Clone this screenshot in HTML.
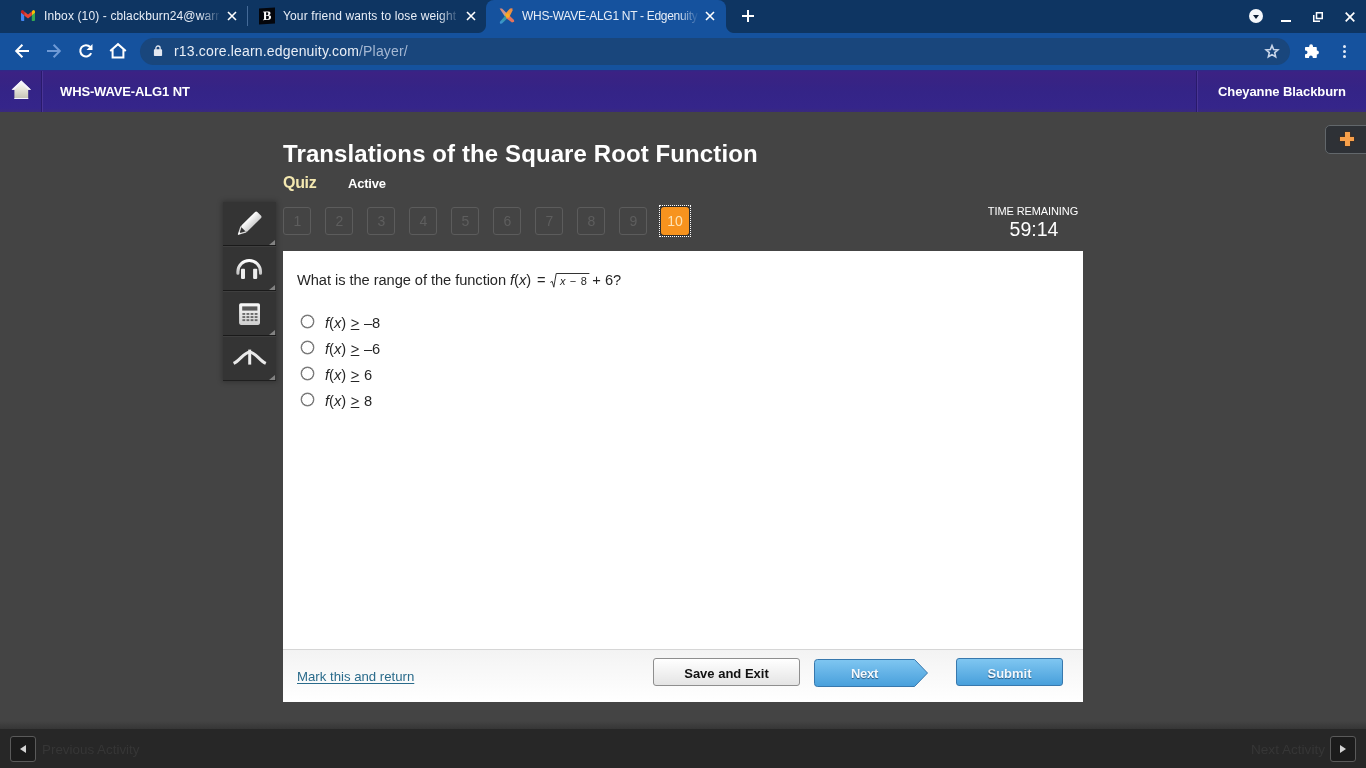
<!DOCTYPE html>
<html>
<head>
<meta charset="utf-8">
<title>WHS-WAVE-ALG1 NT - Edgenuity</title>
<style>
*{box-sizing:border-box;margin:0;padding:0}
html,body{width:1366px;height:768px;overflow:hidden;background:#444444;font-family:"Liberation Sans",sans-serif;}
.abs{position:absolute}
#root{position:absolute;left:0;top:0;width:1366px;height:768px;will-change:transform;overflow:hidden}
#tabbar{position:absolute;left:0;top:0;width:1366px;height:33px;background:#0e3562;}
#toolbar{position:absolute;left:0;top:33px;width:1366px;height:37px;background:#15529e;}
#omni{position:absolute;left:140px;top:38px;width:1150px;height:26.5px;border-radius:13.5px;background:#19467c;}
.tabtxt{position:absolute;top:8px;font-size:12px;color:#e8eef7;white-space:nowrap;overflow:hidden;line-height:16px;letter-spacing:0.13px;-webkit-mask-image:linear-gradient(90deg,#000 0,#000 156px,transparent 177px);mask-image:linear-gradient(90deg,#000 0,#000 156px,transparent 177px)}
#activetab{position:absolute;left:486px;top:0;width:240px;height:33px;background:#15529e;border-radius:8px 8px 0 0;}
#purple{position:absolute;left:0;top:70px;width:1366px;height:42px;background:linear-gradient(#2c2a88 0,#3c2284 2px,#382384 10px,#342487 22px,#35258a 38px,#3a2a7c 42px);}
#bottombar{position:absolute;left:0;top:729px;width:1366px;height:39px;background:#272727;}
#content{position:absolute;left:283px;top:251px;width:800px;height:451px;background:#fff;}
#footer{position:absolute;left:0;top:398px;width:800px;height:53px;background:linear-gradient(#f3f3f3,#ffffff);border-top:1px solid #d6d6d6}

.tri{position:absolute;left:269px;width:0;height:0;border-left:6px solid transparent;border-bottom:5px solid #828282;}
.qn{position:absolute;top:207px;width:28px;height:28px;padding-left:1px;border:1px solid #5c5c5c;border-radius:3px;color:#5e5e5e;font-size:14px;line-height:26px;text-align:center;}
.qn.act{background:#f7931e;border:0;color:#fde3b4;line-height:28px;box-shadow:0 0 0 1px #2c2c2c;border-radius:3px;padding-left:0}
.q{font-size:14.667px;line-height:18px;color:#262626;white-space:nowrap}
.opt{left:42px;font-size:14.667px;line-height:18px;color:#262626;word-spacing:0.5px;white-space:nowrap}
.radio{position:absolute;left:18px;width:13px;height:13px;border:1px solid #6c6c6c;box-shadow:0 0 0 0.4px #8a8a8a;border-radius:50%;background:#fff}
.rad{position:relative;display:inline-block;padding-left:10px;padding-right:3px;margin:0 -1.6px 0 0.2px}
.radin{display:inline-block;font-size:11px;line-height:13px;word-spacing:1.4px;letter-spacing:0}
.btn{font-size:13px;font-weight:bold;line-height:29px;text-align:center;border-radius:3px;white-space:nowrap}
</style>
</head>
<body>
<div id="root">
<!-- browser chrome -->
<div id="tabbar"></div>
<div id="activetab"></div>
<div class="abs" style="left:478px;top:25px;width:8px;height:8px;background:radial-gradient(circle at 0 0, #0e3562 7.5px, #15529e 8.5px)"></div>
<div class="abs" style="left:726px;top:25px;width:8px;height:8px;background:radial-gradient(circle at 100% 0, #0e3562 7.5px, #15529e 8.5px)"></div>
<div id="toolbar"></div>
<div id="omni"></div>

<!-- tab 1: gmail -->
<svg class="abs" style="left:21px;top:10px" width="14" height="11" viewBox="0 0 14 11">
  <path d="M0 1.2 V10 a1 1 0 0 0 1 1 H3.2 V4.2 Z" fill="#4285f4"/>
  <path d="M14 1.2 V10 a1 1 0 0 1 -1 1 H10.8 V4.2 Z" fill="#34a853"/>
  <path d="M10.8 1.6 V5.2 L14 2.8 V1.6 a1.5 1.5 0 0 0 -2.4 -1.2 Z" fill="#fbbc04"/>
  <path d="M3.2 5.4 V1.6 L7 4.6 L10.8 1.6 V5.4 L7 8.4 Z" fill="#ea4335"/>
  <path d="M0 1.6 V2.8 L3.2 5.2 V1.6 L2.4 0.4 A1.5 1.5 0 0 0 0 1.6 Z" fill="#c5221f"/>
</svg>
<div class="tabtxt" style="left:44px;width:176px">Inbox (10) - cblackburn24@warr</div>
<svg class="abs" style="left:227px;top:11px" width="10" height="10" viewBox="0 0 10 10"><path d="M1 1 L9 9 M9 1 L1 9" stroke="#fff" stroke-width="1.6" fill="none"/></svg>
<div class="abs" style="left:247px;top:6px;width:1px;height:20px;background:#446a98"></div>

<!-- tab 2: B -->
<div class="abs" style="left:259px;top:8px;width:16px;height:16px;background:#04060c;transform:skewY(-4deg)"></div>
<div class="abs" style="left:259px;top:8px;width:16px;height:16px;color:#fff;font-family:'Liberation Serif',serif;font-weight:bold;font-size:13px;line-height:16px;text-align:center;transform:skewY(-4deg)">B</div>
<div class="tabtxt" style="left:283px;width:176px">Your friend wants to lose weight</div>
<svg class="abs" style="left:466px;top:11px" width="10" height="10" viewBox="0 0 10 10"><path d="M1 1 L9 9 M9 1 L1 9" stroke="#fff" stroke-width="1.6" fill="none"/></svg>

<!-- tab 3: edgenuity -->
<svg class="abs" style="left:498px;top:8px" width="18" height="17" viewBox="0 0 18 17">
  <defs>
    <linearGradient id="e1" x1="0" y1="0" x2="1" y2="1"><stop offset="0" stop-color="#dd8470"/><stop offset="1" stop-color="#b7a3ad"/></linearGradient>
    <linearGradient id="e2" x1="1" y1="0" x2="0" y2="1"><stop offset="0" stop-color="#e8834a"/><stop offset="1" stop-color="#fbb024"/></linearGradient>
    <linearGradient id="e3" x1="1" y1="0" x2="0" y2="1"><stop offset="0" stop-color="#2f9d86"/><stop offset="1" stop-color="#3f93dc"/></linearGradient>
  </defs>
  <polygon points="1.6,0.4 4,0.6 10,6.6 7.2,9" fill="url(#e1)"/>
  <polygon points="2,15.8 1.8,14 7.4,7.6 10,9.8 4,15.6" fill="url(#e3)"/>
  <polygon points="16.2,13.8 14,14.4 7.8,10 10.4,6.6 16,12" fill="#e3745c"/>
  <polygon points="14.4,0.2 12,0.6 6.6,6.6 10.8,10 14.6,2.4" fill="url(#e2)"/>
  <circle cx="9.4" cy="7.8" r="2" fill="#fbae26"/>
</svg>
<div class="tabtxt" style="left:522px;width:176px;letter-spacing:-0.3px">WHS-WAVE-ALG1 NT - Edgenuity</div>
<svg class="abs" style="left:705px;top:11px" width="10" height="10" viewBox="0 0 10 10"><path d="M1 1 L9 9 M9 1 L1 9" stroke="#fff" stroke-width="1.6" fill="none"/></svg>
<!-- new tab + -->
<svg class="abs" style="left:741px;top:9px" width="14" height="14" viewBox="0 0 14 14"><path d="M7 1 V13 M1 7 H13" stroke="#fff" stroke-width="2" fill="none"/></svg>

<!-- window controls -->
<div class="abs" style="left:1249px;top:9px;width:14px;height:14px;border-radius:7px;background:#f4f7fb"></div>
<div class="abs" style="left:1253px;top:14.5px;width:0;height:0;border-left:3px solid transparent;border-right:3px solid transparent;border-top:4px solid #0b1c33"></div>
<div class="abs" style="left:1281px;top:20px;width:10px;height:2px;background:#fff"></div>
<svg class="abs" style="left:1313px;top:12px" width="10" height="10" viewBox="0 0 10 10">
  <path d="M3.5 0.75 H9.25 V6.5 H3.5 Z" stroke="#fff" stroke-width="1.5" fill="none"/>
  <path d="M0.75 3 V9.25 H7" stroke="#fff" stroke-width="1.5" fill="none"/>
  <rect x="5.4" y="2.6" width="2" height="2" fill="#0b1c33"/>
</svg>
<svg class="abs" style="left:1345px;top:12px" width="10" height="10" viewBox="0 0 10 10"><path d="M0.7 0.7 L9.3 9.3 M9.3 0.7 L0.7 9.3" stroke="#fff" stroke-width="1.7" fill="none"/></svg>

<!-- nav icons -->
<svg class="abs" style="left:14px;top:43px" width="16" height="16" viewBox="0 0 16 16"><path d="M15 8 H3.2 M8.4 1.7 L2.2 8 L8.4 14.3" stroke="#fff" stroke-width="2" fill="none"/></svg>
<svg class="abs" style="left:46px;top:43px" width="16" height="16" viewBox="0 0 16 16"><path d="M1 8 H12.8 M7.6 1.7 L13.8 8 L7.6 14.3" stroke="#6f9ad6" stroke-width="2" fill="none"/></svg>
<svg class="abs" style="left:78px;top:43px" width="16" height="16" viewBox="0 0 16 16">
  <path d="M13.2 10.2 A5.7 5.7 0 1 1 12.2 4" stroke="#fff" stroke-width="2" fill="none"/>
  <path d="M14.5 1 V7 H8.5 Z" fill="#fff"/>
</svg>
<svg class="abs" style="left:109px;top:42px" width="18" height="17" viewBox="0 0 18 17"><path d="M1.2 9 L9 2.2 L16.8 9 M3.6 7.6 V15.5 H14.4 V7.6" stroke="#fff" stroke-width="2" fill="none" stroke-linejoin="miter"/></svg>
<!-- lock -->
<svg class="abs" style="left:153px;top:45px" width="10" height="12" viewBox="0 0 10 12">
  <rect x="0.9" y="4.3" width="8.2" height="6.8" rx="0.8" fill="#e4e8f0"/>
  <path d="M2.9 5 V3.1 A2.1 2.1 0 0 1 7.1 3.1 V5" stroke="#e4e8f0" stroke-width="1.3" fill="none"/>
</svg>
<div class="abs" style="left:174px;top:43px;font-size:14px;line-height:16px;color:#e9eef6;white-space:nowrap;letter-spacing:0.17px">r13.core.learn.edgenuity.com<span style="color:#a5b8d3">/Player/</span></div>
<!-- star -->
<svg class="abs" style="left:1264px;top:43px" width="16" height="16" viewBox="0 0 16 16"><path d="M8 2.6 L9.65 6.5 L13.9 6.85 L10.7 9.65 L11.65 13.8 L8 11.6 L4.35 13.8 L5.3 9.65 L2.1 6.85 L6.35 6.5 Z" stroke="#c8d5e8" stroke-width="1.6" fill="none" stroke-linejoin="miter"/></svg>
<!-- puzzle -->
<svg class="abs" style="left:1303.3px;top:42.6px" width="16" height="16" viewBox="0 0 16 16">
  <path d="M6.2 3.2 A1.9 1.9 0 0 1 10 3.2 V4 H13 a0.8 0.8 0 0 1 0.8 0.8 V7.6 H14 A1.9 1.9 0 0 1 14 11.4 H13.8 V14.2 a0.8 0.8 0 0 1 -0.8 0.8 H9.8 V14.4 A1.9 1.9 0 0 0 6 14.4 V15 H2.8 a0.8 0.8 0 0 1 -0.8 -0.8 V11.2 H2.6 A1.9 1.9 0 0 0 2.6 7.4 H2 V4.8 a0.8 0.8 0 0 1 0.8 -0.8 H6.2 Z" fill="#fff"/>
</svg>
<!-- menu dots -->
<div class="abs" style="left:1342.7px;top:44.7px;width:3.5px;height:3.5px;border-radius:2px;background:#e3ebf7"></div>
<div class="abs" style="left:1342.7px;top:49.7px;width:3.5px;height:3.5px;border-radius:2px;background:#e3ebf7"></div>
<div class="abs" style="left:1342.7px;top:54.7px;width:3.5px;height:3.5px;border-radius:2px;background:#e3ebf7"></div>

<!-- purple header -->
<div id="purple"></div>
<div class="abs" style="left:41px;top:71px;width:1px;height:41px;background:#291a6b"></div>
<div class="abs" style="left:42px;top:71px;width:1px;height:41px;background:#4a3596"></div>
<div class="abs" style="left:1196px;top:71px;width:1px;height:41px;background:#291a6b"></div>
<div class="abs" style="left:1197px;top:71px;width:1px;height:41px;background:#4a3596"></div>
<svg class="abs" style="left:11px;top:80px" width="21" height="20" viewBox="0 0 21 20">
  <defs><linearGradient id="hg" x1="0" y1="0" x2="0" y2="1"><stop offset="0" stop-color="#ffffff"/><stop offset="0.5" stop-color="#e4e2d8"/><stop offset="1" stop-color="#c4c2b4"/></linearGradient></defs>
  <path d="M10.3 0.6 L20 9.8 H17.2 V19 H3.4 V9.8 H0.6 Z" fill="url(#hg)"/>
  <path d="M10.3 0.6 L20 9.8 H17.2 L10.3 3.2 L3.4 9.8 H0.6 Z" fill="#f4f2fb"/>
  <rect x="3.4" y="18" width="13.8" height="1" fill="#f6f4ff"/>
</svg>
<div class="abs" style="left:60px;top:84px;font-size:13px;font-weight:bold;color:#fff;line-height:16px;letter-spacing:-0.14px;white-space:nowrap">WHS-WAVE-ALG1 NT</div>
<div class="abs" style="left:1218px;top:84px;font-size:13px;font-weight:bold;color:#fff;line-height:16px;letter-spacing:-0.08px;white-space:nowrap">Cheyanne Blackburn</div>

<!-- plus button -->
<div class="abs" style="left:1325px;top:125px;width:45px;height:29px;background:#2e3136;border:1px solid #62676b;border-radius:5px 0 0 5px"></div>
<div class="abs" style="left:1340px;top:136.7px;width:14px;height:4.6px;background:#f8a04a;box-shadow:0 0 2px #6a3206"></div>
<div class="abs" style="left:1344.5px;top:132px;width:5px;height:14px;background:#f8a04a;box-shadow:0 0 2px #6a3206"></div>
<div class="abs" style="left:1340px;top:136.7px;width:14px;height:4.6px;background:#f8a04a;"></div>

<!-- titles -->
<div class="abs" style="left:283px;top:139px;font-size:24px;font-weight:bold;color:#fff;line-height:30px;white-space:nowrap;letter-spacing:0.1px">Translations of the Square Root Function</div>
<div class="abs" style="left:283px;top:173px;font-size:16px;font-weight:bold;color:#f4e8b0;line-height:20px;letter-spacing:-0.3px">Quiz</div>
<div class="abs" style="left:348px;top:176px;font-size:13px;font-weight:bold;color:#fff;line-height:16px;letter-spacing:-0.2px">Active</div>

<!-- tools -->
<div class="abs" style="left:223px;top:202px;width:53px;height:179px;background:#343434;box-shadow:0 0 5px 1px rgba(0,0,0,0.28)"></div>
<div class="abs" style="left:223px;top:245px;width:53px;height:1px;background:#1a1a1a"></div><div class="abs" style="left:223px;top:246px;width:53px;height:1px;background:#3f3f3f"></div>
<div class="abs" style="left:223px;top:290px;width:53px;height:1px;background:#1a1a1a"></div><div class="abs" style="left:223px;top:291px;width:53px;height:1px;background:#3f3f3f"></div>
<div class="abs" style="left:223px;top:335px;width:53px;height:1px;background:#1a1a1a"></div><div class="abs" style="left:223px;top:336px;width:53px;height:1px;background:#3f3f3f"></div>
<div class="abs" style="left:223px;top:380px;width:53px;height:1px;background:#1f1f1f"></div>
<div class="tri" style="top:240px"></div>
<div class="tri" style="top:285px"></div>
<div class="tri" style="top:330px"></div>
<div class="tri" style="top:375px"></div>
<!-- pencil -->
<svg class="abs" style="left:235px;top:210px" width="30" height="28" viewBox="0 0 30 28">
  <defs><linearGradient id="pg" x1="0" y1="0" x2="0" y2="1"><stop offset="0" stop-color="#ffffff"/><stop offset="1" stop-color="#cfcfcf"/></linearGradient></defs>
  <g transform="translate(3.2 24.5) rotate(-44.4)">
    <rect x="7.4" y="-4.3" width="22" height="8.6" rx="1.6" fill="url(#pg)"/>
    <path d="M7.6 -3.7 L0.4 0 L7.6 3.7" fill="none" stroke="#dcdcdc" stroke-width="1.3" stroke-linejoin="round"/>
    <path d="M2.6 -1.3 L-0.4 0 L2.6 1.3 Z" fill="#fff"/>
  </g>
</svg>
<!-- headphones -->
<svg class="abs" style="left:235px;top:257px" width="29" height="24" viewBox="0 0 29 24">
  <defs><linearGradient id="hp" x1="0" y1="0" x2="0" y2="1"><stop offset="0" stop-color="#ffffff"/><stop offset="1" stop-color="#c4c4c4"/></linearGradient></defs>
  <path d="M2.9 16.2 V14.75 A11.3 11.3 0 0 1 25.5 14.75 V16.2" stroke="url(#hp)" stroke-width="3.1" fill="none" stroke-linecap="round"/>
  <rect x="6" y="11.8" width="4" height="10.1" rx="0.8" fill="#ededed"/>
  <rect x="18.1" y="11.8" width="4.1" height="10.1" rx="0.8" fill="#ededed"/>
</svg>
<!-- calculator -->
<svg class="abs" style="left:239px;top:302px" width="22" height="24" viewBox="0 0 22 24">
  <defs><linearGradient id="cg" x1="0" y1="0" x2="0" y2="1"><stop offset="0" stop-color="#fafafa"/><stop offset="1" stop-color="#cfcfcf"/></linearGradient></defs>
  <rect x="0.1" y="1.2" width="20.9" height="21.7" rx="1.8" fill="url(#cg)"/>
  <rect x="3.2" y="4.4" width="15.2" height="4.2" fill="#5a5a5a"/>
  <g fill="#6a6a6a">
    <rect x="3.4" y="11" width="2.8" height="1.9"/><rect x="7.5" y="11" width="2.8" height="1.9"/><rect x="11.6" y="11" width="2.8" height="1.9"/><rect x="15.7" y="11" width="2.8" height="1.9"/>
    <rect x="3.4" y="14.1" width="2.8" height="1.9"/><rect x="7.5" y="14.1" width="2.8" height="1.9"/><rect x="11.6" y="14.1" width="2.8" height="1.9"/><rect x="15.7" y="14.1" width="2.8" height="1.9"/>
    <rect x="3.4" y="17.2" width="2.8" height="1.9"/><rect x="7.5" y="17.2" width="2.8" height="1.9"/><rect x="11.6" y="17.2" width="2.8" height="1.9"/><rect x="15.7" y="17.2" width="2.8" height="1.9"/>
  </g>
</svg>
<!-- up arrow -->
<svg class="abs" style="left:231px;top:347px" width="37" height="20" viewBox="0 0 37 20">
  <path d="M2.6 16.4 C 9 13.6, 13 5.2, 18.7 5.2 C 24.4 5.2, 28.4 13.6, 34.8 16.4" stroke="#e9e9e9" stroke-width="3" fill="none" stroke-linecap="butt" stroke-linejoin="round"/>
  <path d="M18.7 2.6 V17.6" stroke="#ececec" stroke-width="3" fill="none" stroke-linecap="butt"/>
</svg>

<!-- question nav -->
<div class="qn" style="left:283px">1</div>
<div class="qn" style="left:325px">2</div>
<div class="qn" style="left:367px">3</div>
<div class="qn" style="left:409px">4</div>
<div class="qn" style="left:451px">5</div>
<div class="qn" style="left:493px">6</div>
<div class="qn" style="left:535px">7</div>
<div class="qn" style="left:577px">8</div>
<div class="qn" style="left:619px">9</div>
<div class="qn act" style="left:661px">10</div>
<div class="abs" style="left:659px;top:205px;width:32px;height:32px;border:1px dotted #fff"></div>

<!-- timer -->
<div class="abs" style="left:978px;top:204px;width:110px;text-align:center;font-size:11px;color:#fff;line-height:14px;white-space:nowrap;letter-spacing:-0.1px">TIME REMAINING</div>
<div class="abs" style="left:979px;top:218px;width:110px;text-align:center;font-size:19.5px;color:#fff;line-height:22px;white-space:nowrap">59:14</div>

<!-- content -->
<div id="content">
  <div class="abs q" style="left:14px;top:20px"><span style="letter-spacing:-0.06px">What is the range of the function <i>f</i>(<i>x</i>)</span><span style="margin-left:2px"> = </span><span class="rad"><svg width="42" height="18" viewBox="0 0 42 18" style="position:absolute;left:0;top:-3px"><path d="M0.3 10.4 L2.2 9.4 L3.8 15.2 L6.2 1.5 H39.4" stroke="#333" stroke-width="1" fill="none"/></svg><span class="radin"><i>x</i> &minus; 8</span></span> + 6?</div>

  <div class="radio" style="top:64px"></div><div class="abs opt" style="top:63px"><i>f</i>(<i>x</i>) <u>&gt;</u> &ndash;8</div>
  <div class="radio" style="top:90px"></div><div class="abs opt" style="top:89px"><i>f</i>(<i>x</i>) <u>&gt;</u> &ndash;6</div>
  <div class="radio" style="top:116px"></div><div class="abs opt" style="top:115px"><i>f</i>(<i>x</i>) <u>&gt;</u> 6</div>
  <div class="radio" style="top:142px"></div><div class="abs opt" style="top:141px"><i>f</i>(<i>x</i>) <u>&gt;</u> 8</div>

  <div id="footer">
    <div class="abs" style="left:14px;top:18.5px;font-size:13.2px;line-height:16px;color:#2a6b8b;text-decoration:underline;text-underline-offset:1.5px;white-space:nowrap">Mark this and return</div>
    <div class="abs btn" style="left:370px;top:8px;width:147px;height:28px;background:linear-gradient(#ffffff,#e4e4e4);border:1px solid #8e8e8e;color:#111;line-height:29px;">Save and Exit</div>
    <svg class="abs" style="left:531px;top:9px" width="116" height="29" viewBox="0 0 116 29">
      <defs><linearGradient id="ng" x1="0" y1="0" x2="0" y2="1"><stop offset="0" stop-color="#7fc6f1"/><stop offset="1" stop-color="#489fdb"/></linearGradient></defs>
      <path d="M3.5 0.5 H100.5 L113.5 14 L100.5 27.5 H3.5 a3 3 0 0 1 -3 -3 V3.5 a3 3 0 0 1 3 -3 Z" fill="url(#ng)" stroke="#3878ad" stroke-width="1"/>
    </svg>
    <div class="abs btn" style="left:531px;top:9px;width:101px;height:28px;color:#f2f8fd;text-shadow:0 1px 1px #25557c;border:0;background:none;line-height:30px;letter-spacing:-0.3px">Next</div>
    <div class="abs btn" style="left:673px;top:8px;width:107px;height:28px;background:linear-gradient(#7fc6f1,#489fdb);border:1px solid #3878ad;color:#f2f8fd;text-shadow:0 1px 1px #25557c;line-height:29px">Submit</div>
  </div>
</div>

<div class="abs" style="left:0;top:721px;width:1366px;height:8px;background:linear-gradient(#444444,#363636)"></div>
<div id="bottombar"></div>
<div class="abs" style="left:10px;top:736px;width:26px;height:26px;border:1px solid #5a5a5a;border-radius:3px;background:#1c1c1c"></div>
<div class="abs" style="left:20px;top:744.5px;width:0;height:0;border-top:4.5px solid transparent;border-bottom:4.5px solid transparent;border-right:6.5px solid #d4d4d4"></div>
<div class="abs" style="left:42px;top:742px;font-size:13.4px;line-height:16px;color:#363636;white-space:nowrap">Previous Activity</div>
<div class="abs" style="left:1330px;top:736px;width:26px;height:26px;border:1px solid #5a5a5a;border-radius:3px;background:#1c1c1c"></div>
<div class="abs" style="left:1339.5px;top:744.5px;width:0;height:0;border-top:4.5px solid transparent;border-bottom:4.5px solid transparent;border-left:6.5px solid #d4d4d4"></div>
<div class="abs" style="right:41px;top:742px;font-size:13.6px;line-height:16px;color:#363636;white-space:nowrap">Next Activity</div>
</div>
</body>
</html>
